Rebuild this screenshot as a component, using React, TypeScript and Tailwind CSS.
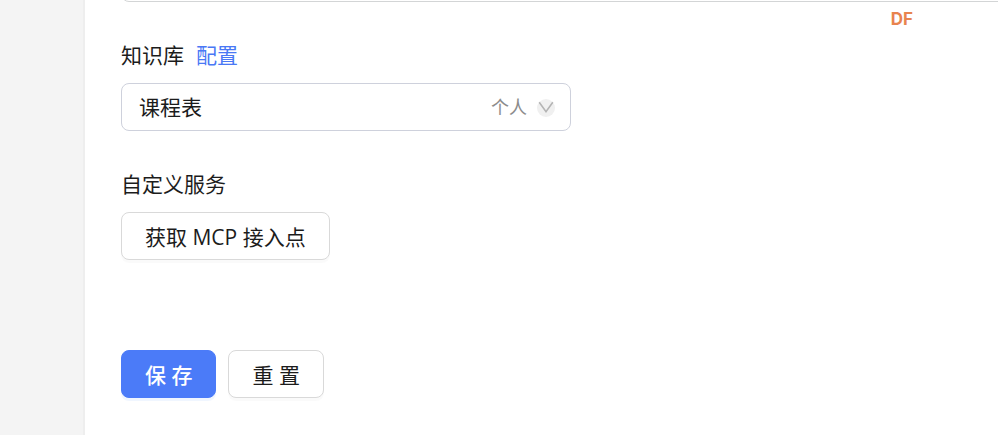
import { useState } from 'react';

const btn = 'h-12 cursor-pointer rounded-lg px-[23px] pt-0.5 text-[21px] leading-8';

function ScopeHint() {
    return (
        <div className="pointer-events-none absolute inset-y-0 right-4 flex items-center gap-2.5 text-lg text-[#8c8c8c]">
            <span>个人</span>
            <svg width="18" height="20" viewBox="0 0 18 20" fill="none" aria-hidden="true">
                <circle cx="9" cy="11" r="9" fill="#f0f0f0" />
                <path d="M2.2 5.2 9 14.6l6.8-9.4" stroke="#b4b4b4" strokeWidth="1.6" />
            </svg>
        </div>
    );
}

export default function App() {
    const [prompt, setPrompt] = useState('');
    const [base, setBase] = useState('课程表');

    const handleReset = () => {
        setPrompt('');
        setBase('课程表');
    };

    return (
        <div className="flex min-h-screen bg-white font-['Open_Sans','Noto_Sans_CJK_SC',sans-serif] text-[21px] leading-8 text-[#1c1c1c]">
            <aside className="w-[85px] shrink-0 border-r-2 border-[#eeeeee] bg-[#f4f4f4]" />

            <main className="min-w-0 flex-1 overflow-hidden pl-9">
                {/* tail of the field scrolled off the top */}
                <div className="flex h-0.5 items-end overflow-hidden">
                    <textarea
                        aria-label="prompt"
                        value={prompt}
                        onChange={e => setPrompt(e.target.value)}
                        className="-mr-9 h-12 grow resize-none rounded-lg border border-[#d3d5d6]"
                    />
                </div>
                <p className="mr-[85px] pt-[5px] text-right font-['Inter',sans-serif] text-[17px] leading-6 font-bold text-[#e8834e]">DF</p>

                <form onSubmit={e => e.preventDefault()}>
                    <div className="mt-2 flex gap-3">
                        <label htmlFor="knowledge">知识库</label>
                        <a href="#config" className="text-[#4a78f5]">配置</a>
                    </div>
                    <div className="relative mt-3 w-[450px] max-w-full">
                        <select
                            id="knowledge"
                            value={base}
                            onChange={e => setBase(e.target.value)}
                            className="block h-12 w-full appearance-none rounded-lg border border-[#ced1dc] bg-white px-[17px] text-[21px] leading-8"
                        >
                            <option>课程表</option>
                        </select>
                        <ScopeHint />
                    </div>

                    <h2 className="mt-[37px]">自定义服务</h2>
                    <button type="button" className={`${btn} mt-3 border border-[#d9d9d9] bg-white shadow-[0_3px_0_rgba(0,0,0,0.02)]`}>
                        获取 MCP 接入点
                    </button>

                    <div className="mt-[90px] flex gap-3">
                        <button type="submit" className={`${btn} border border-[#4b7bf8] bg-[#4b7bf8] font-medium text-white shadow-[0_3px_0_rgba(5,95,255,0.06)]`}>
                            保 存
                        </button>
                        <button type="button" onClick={handleReset} className={`${btn} border border-[#d9d9d9] bg-white shadow-[0_3px_0_rgba(0,0,0,0.02)]`}>
                            重 置
                        </button>
                    </div>
                </form>
            </main>
        </div>
    );
}
